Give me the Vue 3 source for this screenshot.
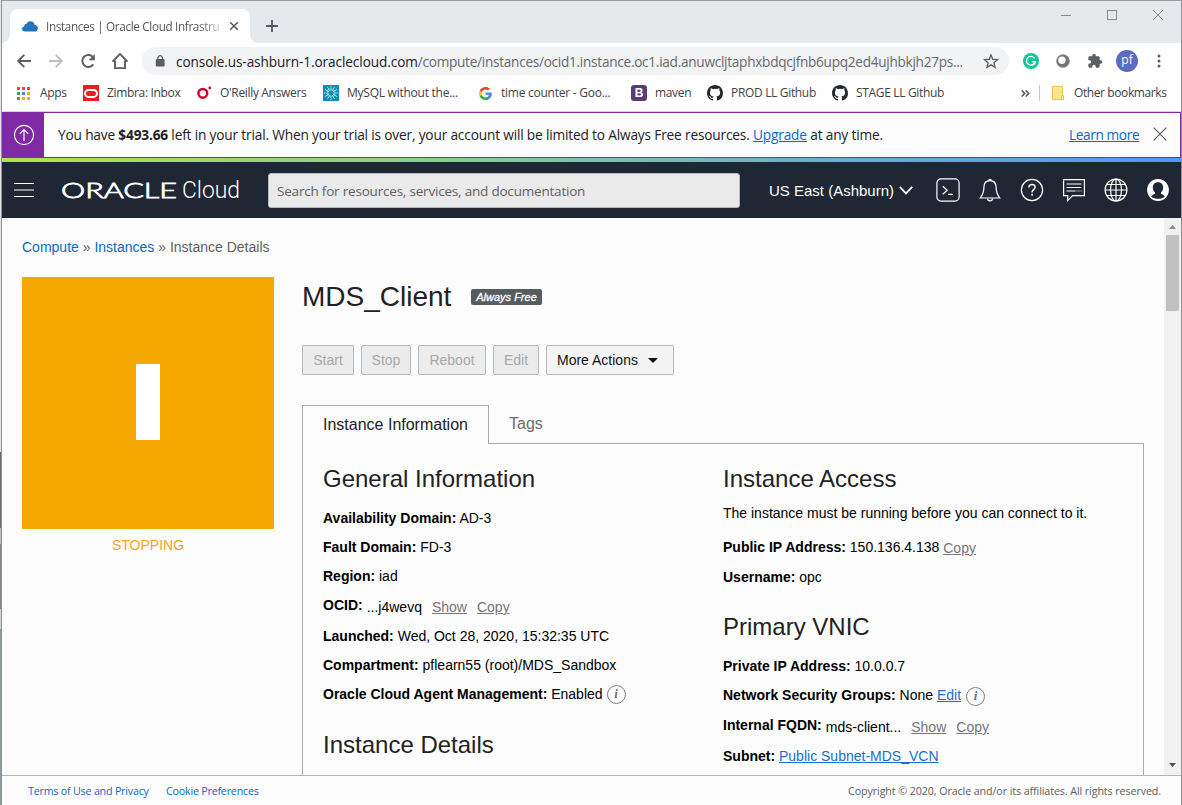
<script setup>
const bookmarks = [
  { icon: 'apps', label: 'Apps', cls: 'b-apps' },
  { icon: 'zimbra', label: 'Zimbra: Inbox', cls: 'b-zimbra' },
  { icon: 'oreilly', label: "O'Reilly Answers", cls: 'b-oreilly' },
  { icon: 'mysql', label: 'MySQL without the...', cls: 'b-mysql' },
  { icon: 'google', label: 'time counter - Goo...', cls: 'b-google' },
  { icon: 'maven', label: 'maven', cls: 'b-maven' },
  { icon: 'github', label: 'PROD LL Github', cls: 'b-prod' },
  { icon: 'github', label: 'STAGE LL Github', cls: 'b-stage' },
]
const appDots = ['#ea4335', '#ea4335', '#ea4335', '#34a853', '#4285f4', '#fbaa05', '#34a853', '#fbaa05', '#fbaa05']
const rays = Array.from({ length: 12 }, (_, i) => i * 30)
const actions = [
  { label: 'Start', cls: 'w-start' },
  { label: 'Stop', cls: 'w-stop' },
  { label: 'Reboot', cls: 'w-reboot' },
  { label: 'Edit', cls: 'w-edit' },
]
</script>

<template>
  <div class="screen">
    <div class="desktop">
      <i class="d1"></i><i class="d2"></i><i class="d3"></i><i class="d4"></i><i class="d5"></i><i class="d6"></i>
    </div>
    <div class="window">
      <div class="tabstrip">
        <div class="tab">
          <svg class="cloud" width="16" height="11" viewBox="0 0 16 11"><path d="M3 10.5C1.2 10.5.1 9.4.1 8c0-1.300.9-2.400 2.200-2.500C2 3.500 3.300 2.500 4.700 2.700 5.500 1 6.900.3 8.500.3c2.300 0 3.700 1.300 4 3.400C14.700 4 15.900 5.400 15.900 7.200c0 2-1.300 3.300-3.200 3.300z" fill="#2173bd" /></svg>
          <span class="tab-title">Instances | Oracle Cloud Infrastru</span>
          <svg class="tab-x" width="10" height="10" viewBox="0 0 10 10"><path d="M1.200 1.200l7.600 7.600M8.800 1.200L1.200 8.800" stroke="#54585c" stroke-width="1.500" /></svg>
        </div>
        <svg class="plus" width="12" height="12" viewBox="0 0 12 12"><path d="M6 0v12M0 6h12" stroke="#54585c" stroke-width="1.800" /></svg>
        <div class="caption">
          <svg width="10" height="10" viewBox="0 0 10 10"><path d="M0 5.500h10" stroke="#868a8d" /></svg>
          <svg width="10" height="10" viewBox="0 0 10 10"><rect x=".5" y=".5" width="9" height="9" fill="none" stroke="#868a8d" /></svg>
          <svg width="10" height="10" viewBox="0 0 10 10"><path d="M0 0l10 10M10 0L0 10" stroke="#868a8d" /></svg>
        </div>
      </div>

      <div class="toolbar">
        <div class="nav">
          <svg width="16" height="16" viewBox="0 0 16 16"><path d="M15 8H2.500M8.300 1.900L2.200 8l6.100 6.100" fill="none" stroke="#5b5f63" stroke-width="1.900" /></svg>
          <svg width="16" height="16" viewBox="0 0 16 16"><path d="M1 8h12.500M7.700 1.900L13.800 8l-6.100 6.100" fill="none" stroke="#bcbec0" stroke-width="1.900" /></svg>
          <svg width="16" height="16" viewBox="0 0 16 16"><path d="M13.300 11.400A6 6 0 1 1 13.200 4.500" fill="none" stroke="#5b5f63" stroke-width="2" /><path d="M14.800 1v6.200H8.600z" fill="#5b5f63" /></svg>
          <svg width="18" height="18" viewBox="0 0 18 18"><path d="M1.400 9.600L9 2l7.600 7.600M4 8.500v7.600h10V8.500" fill="none" stroke="#5b5f63" stroke-width="1.900" /></svg>
        </div>
        <div class="omnibox">
          <svg width="10" height="12" viewBox="0 0 10 12"><rect x=".8" y="4" width="8.800" height="7.600" rx=".8" fill="#5b5f63" /><path d="M2.900 4.500V3a2.300 2.300 0 0 1 4.600 0v1.500" fill="none" stroke="#5b5f63" stroke-width="1.300" /></svg>
          <span class="url"><b>console.us-ashburn-1.oraclecloud.com</b>/compute/instances/ocid1.instance.oc1.iad.anuwcljtaphxbdqcjfnb6upq2ed4ujhbkjh27ps...</span>
          <svg class="star" width="16" height="16" viewBox="0 0 24 24"><path d="M12 2.900l2.700 6.500 7 .6-5.300 4.600 1.600 6.900L12 17.800l-6 3.700 1.600-6.900L2.300 10l7-.6z" fill="none" stroke="#5b5f63" stroke-width="2" /></svg>
        </div>
        <div class="exts">
          <svg width="16" height="16" viewBox="0 0 16 16"><circle cx="8" cy="8" r="8" fill="#15c39a" /><path d="M11.600 5.400A4.400 4.400 0 1 0 12.200 8.700H9.300M12.200 8.700l-.7 2.800" fill="none" stroke="#fff" stroke-width="1.400" /></svg>
          <svg width="14" height="14" viewBox="0 0 14 14"><circle cx="7" cy="7" r="6.600" fill="#707274" /><circle cx="6" cy="6.200" r="3.700" fill="#fff" /><circle cx="7" cy="7" r="6.300" fill="none" stroke="#999" stroke-width=".7" /></svg>
          <svg width="16" height="16" viewBox="0 0 24 24"><path d="M20.500 11H19V7c0-1.100-.9-2-2-2h-4V3.500a2.500 2.500 0 0 0-5 0V5H4c-1.100 0-2 .9-2 2v3.800h1.500a2.700 2.700 0 0 1 0 5.400H2V20c0 1.100.9 2 2 2h3.800v-1.500a2.700 2.700 0 0 1 5.400 0V22H17c1.100 0 2-.9 2-2v-4h1.500a2.500 2.500 0 0 0 0-5z" fill="#5b5f63" /></svg>
          <span class="avatar">pf</span>
          <svg width="4" height="14" viewBox="0 0 4 14"><circle cx="2" cy="2" r="1.500" fill="#5b5f63" /><circle cx="2" cy="7" r="1.500" fill="#5b5f63" /><circle cx="2" cy="12" r="1.500" fill="#5b5f63" /></svg>
        </div>
      </div>

      <div class="bookmarks">
        <div v-for="b in bookmarks" :key="b.label" class="bm" :class="b.cls">
          <svg v-if="b.icon === 'apps'" width="13" height="13" viewBox="0 0 13 13"><rect v-for="(c, i) in appDots" :key="i" :x="(i % 3) * 5" :y="Math.floor(i / 3) * 5" width="3" height="3" :fill="c" /></svg>
          <svg v-else-if="b.icon === 'zimbra'" width="16" height="16" viewBox="0 0 16 16"><rect width="16" height="16" fill="#ea1b22" /><rect x="2" y="4.900" width="12" height="7" rx="3.500" fill="none" stroke="#fff" stroke-width="2" /></svg>
          <svg v-else-if="b.icon === 'oreilly'" width="15" height="14" viewBox="0 0 15 14"><circle cx="5.800" cy="7.300" r="4.400" fill="none" stroke="#d3002d" stroke-width="2.500" /><circle cx="12.800" cy="2" r="1.400" fill="#d3002d" /></svg>
          <svg v-else-if="b.icon === 'mysql'" width="16" height="16" viewBox="0 0 16 16"><rect width="16" height="16" fill="#0e8fb8" /><g stroke="#d9f3f8" stroke-width=".9"><path v-for="r in rays" :key="r" d="M8 5.500V1" stroke-dasharray="3 .6" :transform="`rotate(${r} 8 8)`" /></g></svg>
          <svg v-else-if="b.icon === 'google'" width="13" height="13" viewBox="0 0 48 48"><path fill="#EA4335" d="M24 9.500c3.540 0 6.710 1.220 9.210 3.600l6.850-6.850C35.900 2.380 30.470 0 24 0 14.620 0 6.510 5.380 2.560 13.220l7.980 6.190C12.430 13.720 17.740 9.500 24 9.500z" /><path fill="#4285F4" d="M46.980 24.550c0-1.570-.15-3.090-.38-4.550H24v9.020h12.940c-.58 2.960-2.260 5.480-4.780 7.180l7.730 6c4.510-4.180 7.090-10.360 7.090-17.650z" /><path fill="#FBBC05" d="M10.530 28.590A14.500 14.500 0 0 1 9.770 24c0-1.600.27-3.140.76-4.590l-7.980-6.190A23.900 23.900 0 0 0 0 24c0 3.880.92 7.540 2.560 10.780z" /><path fill="#34A853" d="M24 48c6.480 0 11.930-2.130 15.890-5.810l-7.730-6c-2.150 1.450-4.920 2.300-8.160 2.300-6.260 0-11.570-4.220-13.470-9.910l-7.980 6.190C6.510 42.620 14.620 48 24 48z" /></svg>
          <span v-else-if="b.icon === 'maven'" class="bootstrap">B</span>
          <svg v-else width="16" height="16" viewBox="0 0 16 16"><path fill="#24292e" d="M8 0C3.580 0 0 3.580 0 8c0 3.540 2.290 6.530 5.470 7.590.4.070.55-.17.55-.38 0-.19-.01-.82-.01-1.490-2.010.37-2.530-.49-2.690-.94-.09-.23-.48-.94-.82-1.130-.28-.15-.68-.52-.01-.53.63-.01 1.080.58 1.230.82.72 1.210 1.870.87 2.330.66.070-.52.280-.87.510-1.070-1.780-.2-3.640-.89-3.640-3.950 0-.87.310-1.590.820-2.150-.080-.2-.360-1.020.080-2.120 0 0 .670-.210 2.200.820a7.600 7.600 0 0 1 4 0c1.530-1.040 2.200-.820 2.200-.820.440 1.100.160 1.920.080 2.120.510.560.820 1.270.820 2.150 0 3.070-1.870 3.750-3.650 3.950.290.250.540.730.540 1.480 0 1.070-.010 1.930-.010 2.200 0 .210.150.460.550.380A8 8 0 0 0 16 8c0-4.420-3.580-8-8-8z" /></svg>
          <span class="bm-label">{{ b.label }}</span>
        </div>
        <svg class="more" width="9" height="7" viewBox="0 0 9 7"><path d="M.7.5l3 3-3 3M4.700.5l3 3-3 3" fill="none" stroke="#4b4f53" stroke-width="1.500" /></svg>
        <i class="bm-sep"></i>
        <div class="bm other">
          <svg width="12" height="14" viewBox="0 0 12 14"><path d="M.5.500h10v9h1v4H.500z" fill="#ffe58f" stroke="#eac54b" /><path d="M9.500 13V9.500" stroke="#eac54b" /></svg>
          <span class="bm-label">Other bookmarks</span>
        </div>
      </div>

      <div class="banner">
        <div class="banner-icon">
          <svg width="22" height="22" viewBox="0 0 22 22"><circle cx="11" cy="11" r="9.600" fill="none" stroke="#fff" stroke-width="1.100" /><path d="M11 17V5.700M6.800 9.900L11 5.700l4.200 4.200" fill="none" stroke="#fff" stroke-width="1.200" /></svg>
        </div>
        <p class="banner-text">You have <b>$493.66</b> left in your trial. When your trial is over, your account will be limited to Always Free resources. <a>Upgrade</a> at any time.</p>
        <a class="learn">Learn more</a>
        <svg class="banner-x" width="14" height="14" viewBox="0 0 14 14"><path d="M.7.700l12.600 12.600M13.300.700L.700 13.300" stroke="#5e5e5e" stroke-width="1.200" /></svg>
      </div>
      <div class="rainbow"></div>

      <header class="header">
        <svg class="burger" width="20" height="14" viewBox="0 0 20 14"><path d="M0 .5h20M0 13.500h20" stroke="#fff" /><path d="M0 7h20" stroke="#8e9396" stroke-width="2" /></svg>
        <svg class="logo" width="180" height="28" viewBox="0 0 180 28">
          <text class="logo-oracle" x="-1" y="22" textLength="116" lengthAdjust="spacingAndGlyphs">ORACLE</text>
          <text class="logo-cloud" x="120" y="22" textLength="58" lengthAdjust="spacingAndGlyphs">Cloud</text>
        </svg>
        <div class="search">Search for resources, services, and documentation</div>
        <div class="region">
          <span>US East (Ashburn)</span>
          <svg width="14" height="9" viewBox="0 0 14 9"><path d="M.8.800L7 7.400 13.200.800" fill="none" stroke="#fff" stroke-width="1.700" /></svg>
        </div>
        <div class="head-icons">
          <svg width="24" height="24" viewBox="0 0 24 24"><rect x=".9" y=".9" width="22.200" height="22.200" rx="4" fill="none" stroke="#fff" stroke-width="1.200" /><path d="M6.800 8.200l4.400 4-4.400 4M12 16.300h5" fill="none" stroke="#fff" stroke-width="1.200" /></svg>
          <svg width="24" height="24" viewBox="0 0 24 24"><path d="M12 2.700c-4 0-6.100 3-6.100 6.800 0 5.300-1.400 7.500-3.700 10.500h19.600c-2.300-3-3.700-5.200-3.700-10.500 0-3.800-2.100-6.800-6.100-6.800z" fill="none" stroke="#fff" stroke-width="1.200" /><path d="M10.800 2.500a1.200 1.200 0 0 1 2.400 0M9.600 20.500a2.400 2.400 0 0 0 4.800 0" fill="none" stroke="#fff" stroke-width="1.300" /></svg>
          <svg width="24" height="24" viewBox="0 0 24 24"><circle cx="12" cy="12" r="10.600" fill="none" stroke="#fff" stroke-width="1.200" /><path d="M8.900 9.500c0-1.900 1.300-3 3.100-3s3.100 1 3.100 2.700c0 2.500-3 2.300-3 4.800v.4" fill="none" stroke="#fff" stroke-width="1.500" /><circle cx="12.100" cy="16.800" r="1" fill="#fff" /></svg>
          <svg width="24" height="24" viewBox="0 0 24 24"><path d="M1.600 1.600h20.800v16H10.500l-4.800 5v-5H1.600z" fill="none" stroke="#fff" stroke-width="1.200" /><path d="M4.500 6h15M4.500 9.500h15M4.500 13h9" stroke="#fff" stroke-width="1.200" /><path d="M14.500 13h5" stroke="#fff" stroke-width="1.200" stroke-dasharray="1 1" /></svg>
          <svg width="24" height="24" viewBox="0 0 24 24"><g fill="none" stroke="#fff" stroke-width="1.200"><circle cx="12" cy="12" r="10.900" /><ellipse cx="12" cy="12" rx="5.500" ry="10.900" /><path d="M12 1v22M1 12h22M2.800 6.500h18.400M2.800 17.500h18.400" /></g></svg>
          <svg width="24" height="24" viewBox="0 0 24 24"><circle cx="12" cy="12" r="10.900" fill="#fff" /><path d="M12 4.300c3.200 0 5.200 2.200 5.200 5.300 0 2.200-.9 3.800-2.200 4.800v1.300c1.600.9 3.300 1.200 3.700 3.100-1.900 1.400-4.200 2-6.700 2s-4.800-.6-6.700-2c.4-1.900 2.100-2.200 3.700-3.100v-1.300c-1.300-1-2.200-2.600-2.200-4.800 0-3.100 2-5.300 5.200-5.300z" fill="#1e2733" /></svg>
        </div>
      </header>

      <div class="content">
        <main class="page">
          <nav class="crumbs"><a>Compute</a> » <a>Instances</a> » Instance Details</nav>
          <div class="columns">
            <aside class="status">
              <div class="tile"><i></i></div>
              <div class="state">STOPPING</div>
            </aside>
            <section class="detail">
              <div class="title-row"><h1>MDS_Client</h1><span class="free">Always Free</span></div>
              <div class="actions">
                <button v-for="a in actions" :key="a.label" class="btn" :class="a.cls" disabled>{{ a.label }}</button>
                <button class="btn more-actions">More Actions<i></i></button>
              </div>
              <div class="tabs">
                <div class="tab-on">Instance Information</div>
                <div class="tab-off">Tags</div>
              </div>
              <div class="panel">
                <div class="col left">
                  <h2>General Information</h2>
                  <div class="rows">
                    <div class="row"><b>Availability Domain:</b> AD-3</div>
                    <div class="row"><b>Fault Domain:</b> FD-3</div>
                    <div class="row"><b>Region:</b> iad</div>
                    <div class="row split"><b>OCID:</b><span class="val">...j4wevq</span><a class="grey show">Show</a><a class="grey">Copy</a></div>
                    <div class="row"><b>Launched:</b> Wed, Oct 28, 2020, 15:32:35 UTC</div>
                    <div class="row"><b>Compartment:</b> pflearn55 (root)/MDS_Sandbox</div>
                    <div class="row with-info"><span><b>Oracle Cloud Agent Management:</b> Enabled</span><span class="info">i</span></div>
                  </div>
                  <h2 class="second">Instance Details</h2>
                </div>
                <div class="col right">
                  <h2>Instance Access</h2>
                  <p class="note">The instance must be running before you can connect to it.</p>
                  <div class="row ip"><b>Public IP Address:</b> 150.136.4.138 <a class="grey drop">Copy</a></div>
                  <div class="row"><b>Username:</b> opc</div>
                  <h2 class="vnic">Primary VNIC</h2>
                  <div class="rows">
                    <div class="row"><b>Private IP Address:</b> 10.0.0.7</div>
                    <div class="row with-info nsg"><span><b>Network Security Groups:</b> None <a>Edit</a></span><span class="info">i</span></div>
                    <div class="row split"><b>Internal FQDN:</b><span class="val">mds-client...</span><a class="grey show">Show</a><a class="grey">Copy</a></div>
                    <div class="row"><b>Subnet:</b> <a>Public Subnet-MDS_VCN</a></div>
                  </div>
                </div>
              </div>
            </section>
          </div>
        </main>
        <div class="scroll">
          <svg width="7" height="4" viewBox="0 0 7 4"><path d="M0 4L3.500 0 7 4z" fill="#8b8b8b" /></svg>
          <div class="thumb"></div>
          <svg class="down" width="7" height="4" viewBox="0 0 7 4"><path d="M0 0l3.500 4L7 0z" fill="#505050" /></svg>
        </div>
      </div>

      <footer class="footer">
        <a class="terms">Terms of Use and Privacy</a>
        <a class="cookies">Cookie Preferences</a>
        <span class="copy">Copyright © 2020, Oracle and/or its affiliates. All rights reserved.</span>
      </footer>
    </div>
  </div>
</template>

<style>
html, body { margin: 0; overflow: hidden; }
</style>

<style scoped>
* { box-sizing: border-box; }
svg { display: block; flex: none; }
h1, h2, p { margin: 0; font-weight: 400; }
.screen { display: flex; width: 1182px; height: 805px; overflow: hidden; font-family: "Liberation Sans", Arial, sans-serif; font-size: 14px; color: #000; white-space: nowrap; }
.desktop { flex: none; display: flex; flex-direction: column; width: 2px; border-right: 1px solid #8e9297; }
.desktop i { display: block; }
.d1 { height: 452px; background: #e4e4e6; }
.d2 { height: 76px; background: #75686a; }
.d3 { height: 16px; background: #b9bcbe; }
.d4 { height: 65px; background: #7f868a; }
.d5 { height: 20px; background: #cfcfcf; }
.d6 { flex: 1; background: #8d9aa2; }
.window { flex: none; display: flex; flex-direction: column; width: 1180px; height: 805px; border-top: 1px solid #9b9da1; border-right: 1px solid #8e9297; background: #fcfcfc; }

.tabstrip { flex: none; display: flex; height: 42px; background: #e6e9ec; font-family: "Open Sans", "Noto Sans", sans-serif; }
.tab { position: relative; flex: none; display: flex; align-items: center; width: 240px; height: 34px; margin: 8px 0 0 8px; padding-left: 12px; background: #fff; border-radius: 8px 8px 0 0; }
.tab::before, .tab::after { content: ""; position: absolute; bottom: 0; width: 8px; height: 8px; }
.tab::before { left: -8px; background: radial-gradient(circle at 0 0, #e6e9ec 7.500px, #fff 8px); }
.tab::after { right: -8px; background: radial-gradient(circle at 100% 0, #e6e9ec 7.500px, #fff 8px); }
.tab-title { flex: none; width: 175px; margin-left: 8px; font-size: 11.7px; letter-spacing: -0.33px; color: #54585c; -webkit-mask-image: linear-gradient(90deg, #000 88%, rgba(0, 0, 0, .2) 100%); mask-image: linear-gradient(90deg, #000 88%, rgba(0, 0, 0, .2) 100%); }
.tab-x { margin-left: 8px; }
.plus { margin: 19px 0 0 16px; }
.caption { display: flex; gap: 36px; margin: 9px 18px 0 auto; }

.toolbar { flex: none; display: flex; align-items: center; height: 36px; background: #fff; }
.nav { display: flex; align-items: center; gap: 16px; width: 140px; padding-left: 14px; }
.nav svg:last-child { margin-left: -1px; }
.omnibox { display: flex; align-items: center; width: 867px; height: 28px; padding-left: 13px; border-radius: 14px; background: #f1f3f4; }
.url { flex: none; width: 800px; margin-left: 11px; font-family: "Open Sans", "Noto Sans", sans-serif; font-size: 13.6px; letter-spacing: -0.265px; color: #66696d; }
.url b { font-weight: 400; letter-spacing: -0.08px; color: #202124; }
.star { margin-left: 7px; }
.exts { display: flex; align-items: center; margin-left: 14px; }
.exts svg:nth-child(2) { margin-left: 17px; }
.exts svg:nth-child(3) { margin-left: 17px; }
.avatar { width: 22px; height: 22px; margin: 0 19px 0 13px; border-radius: 50%; background: #5c6bc0; color: #fff; font: 12px/20px "Open Sans", sans-serif; text-align: center; }

.bookmarks { flex: none; display: flex; align-items: center; height: 33px; padding: 0 0 4px 15px; background: #fff; border-bottom: 1px solid #dadce0; font-family: "Open Sans", "Noto Sans", sans-serif; font-size: 12px; color: #3e4145; }
.bm { flex: none; display: flex; align-items: center; }
.bm-label { margin: -1px 0 0 8px; letter-spacing: -0.33px; }
.b-apps { width: 66px; }
.b-apps .bm-label { margin-left: 10px; }
.b-zimbra { width: 114px; }
.b-oreilly { width: 126px; }
.b-mysql { width: 156px; }
.b-google { width: 152px; }
.b-google .bm-label { margin-left: 9px; letter-spacing: -0.25px; }
.b-mysql .bm-label { letter-spacing: -0.25px; }
.b-maven { width: 76px; }
.b-prod { width: 125px; }
.b-stage { width: 189px; }
.bootstrap { width: 16px; height: 16px; border-radius: 3px; background: #563d7c; color: #fff; font: bold 12px/16px "Liberation Sans", sans-serif; text-align: center; }
.bm-sep { width: 1px; height: 16px; margin: 0 12px 0 9px; background: #c7cacd; }
.other .bm-label { margin-left: 10px; letter-spacing: -0.4px; }

.banner { flex: none; display: flex; align-items: center; height: 46px; border: 1px solid #7f2aa3; border-left: 0; background: #fcfcfc; font-family: "Open Sans", "Noto Sans", sans-serif; font-size: 13.700px; color: #222; }
.banner-icon { flex: none; display: flex; align-items: center; justify-content: center; width: 42px; height: 46px; padding-left: 2px; background: #7f2aa3; }
.banner-text { flex: none; margin: -1px 0 0 14px; width: 1011px; letter-spacing: -0.175px; }
.banner a { color: #0b69c7; text-decoration: underline; }
.learn { flex: none; width: 70px; margin-top: -2px; letter-spacing: -0.4px; }
.banner-x { margin: -2px 0 0 14px; }
.rainbow { flex: none; height: 4px; background: linear-gradient(90deg, #b3e349, #84c6a3 45%, #6fb2c8 67%, #5196ff); }

.header { flex: none; display: flex; align-items: center; height: 56px; padding-left: 12px; background: #1e2733; color: #fff; }
.logo { margin-left: 28px; overflow: visible; fill: #fff; }
.logo-oracle { font: 300 21px "Lato", sans-serif; stroke: #fff; stroke-width: .8px; }
.logo-cloud { font: 300 23.500px "Roboto", sans-serif; }
.search { width: 472px; height: 35px; margin-left: 26px; padding-left: 8px; border: 1px solid #b3bac2; border-radius: 3px; background: #eaeaea; color: #5f5f5f; font: 13.500px/34px "Open Sans", sans-serif; letter-spacing: -0.2px; }
.region { display: flex; align-items: center; width: 144px; margin: 1px 0 0 29px; font-size: 15px; }
.region svg { margin-left: auto; }
.head-icons { display: flex; gap: 18px; margin-left: 23px; }

.content { flex: none; display: flex; height: 557px; overflow: hidden; }
.page { width: 1162px; padding: 18px 0 0 20px; }
.crumbs { height: 41px; line-height: 22px; color: #5f5f5f; }
.crumbs a { color: #0b69c7; }
.columns { display: flex; gap: 28px; }
.tile { display: flex; align-items: center; justify-content: center; width: 252px; height: 252px; background: #f5a800; }
.tile i { width: 24px; height: 76px; margin-bottom: 3px; background: #fff; }
.state { height: 32px; color: #f5a31c; line-height: 32px; text-align: center; }
.detail { width: 842px; }
.title-row { display: flex; align-items: center; height: 40px; color: #222; }
h1 { width: 169px; font-size: 28px; line-height: 40px; }
.free { width: 71px; height: 16px; border-radius: 2px; background: #565c60; color: #fff; font-size: 11px; font-style: italic; line-height: 16px; text-align: center; -webkit-text-stroke: 0.3px #fff; }
.actions { display: flex; gap: 7px; margin-top: 28px; }
.btn { height: 30px; padding: 0; border: 1px solid #b2b9c4; border-radius: 2px; background: #ececec; color: #a9a9a9; font: 14px "Liberation Sans", sans-serif; text-align: center; }
.w-start { width: 52px; }
.w-stop { width: 50px; }
.w-reboot { width: 68px; }
.w-edit { width: 46px; }
.more-actions { display: flex; align-items: center; width: 128px; padding-left: 10px; background: #f4f4f4; color: #111; }
.more-actions i { margin-left: 10px; border: 5px solid transparent; border-top-color: #111; border-bottom: 0; }
.tabs { position: relative; z-index: 1; display: flex; height: 39px; margin-top: 30px; font-size: 16px; }
.tab-on { width: 187px; height: 39px; padding-left: 20px; border: 1px solid #a8aaac; border-bottom: 0; background: #fcfcfc; line-height: 38px; color: #222; }
.tab-off { margin-left: 20px; line-height: 37px; color: #6b6b6b; }
.panel { display: flex; height: 400px; margin-top: -1px; border: 1px solid #a8aaac; padding: 19px 0 0 20px; }
.col { width: 400px; }
h2 { height: 32px; font-size: 24px; line-height: 32px; color: #222; }
.rows { padding-top: 9px; }
.row { height: 29px; line-height: 29px; }
.row a { color: #1a6fcb; text-decoration: underline; }
.row a.grey { color: #757575; }
.split { display: flex; height: 31px; }
.split b { line-height: 28px; }
.split span, .split a { line-height: 32px; }
.val { margin-left: 4px; }
.show { margin: 0 10px; }
.with-info { display: flex; align-items: center; }
.info { width: 19px; height: 19px; margin: 0 0 0 4px; border: 1.500px solid #808080; border-radius: 50%; color: #707070; font: italic bold 13px/16px "Liberation Serif", serif; text-align: center; }
.nsg { height: 30px; align-items: flex-start; }
.nsg .info { margin: 6px 0 0 5px; }
.second { margin-top: 20px; }
.note { height: 38px; line-height: 37px; }
.ip { height: 30px; }
.drop { position: relative; top: 1px; }
.vnic { margin-top: 19px; }
.scroll { display: flex; flex-direction: column; align-items: center; width: 17px; height: 557px; padding: 7px 0 8px; background: #f1f1f1; }
.thumb { width: 13px; height: 76px; margin-top: 6px; background: #c1c1c1; }
.down { margin-top: auto; }

.footer { flex: none; display: flex; align-items: center; height: 30px; padding: 0 20px 0 26px; border-top: 1px solid #b2b4be; font: 10.700px "Open Sans", sans-serif; color: #5f5f5f; }
.footer a { flex: none; color: #0b69c7; letter-spacing: -0.2px; }
.terms { width: 120px; }
.cookies { margin-left: 18px; }
.copy { margin-left: auto; letter-spacing: -0.09px; }
</style>
